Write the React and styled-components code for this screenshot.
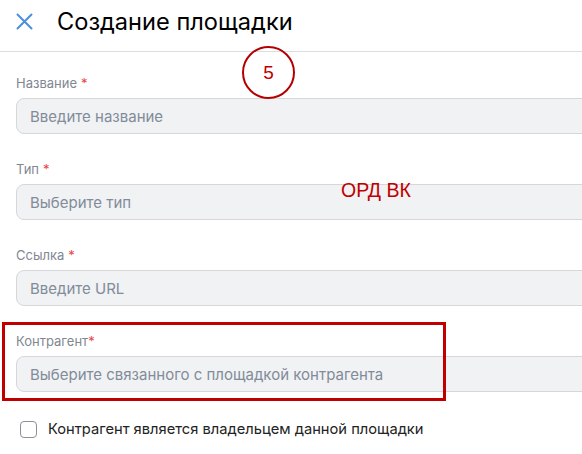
import React from "react";
import styled, { createGlobalStyle } from "styled-components";

const Global = createGlobalStyle`
  html, body { margin: 0; padding: 0; background: #fff; }
  body { font-family: Inter, "Noto Sans", sans-serif; overflow: hidden; }
  * { box-sizing: border-box; }
`;

const Page = styled.div`
  position: relative;
  width: 582px;
  height: 454px;
  overflow: hidden;
  background: #fff;
`;

const Header = styled.div`
  display: flex;
  align-items: center;
  gap: 23px;
  height: 52px;
  padding: 0 0 8px 15px;
  border-bottom: 1px solid #dcdde0;
`;

const CloseBtn = styled.button`
  display: flex;
  align-items: center;
  justify-content: center;
  width: 19px;
  height: 19px;
  padding: 0;
  border: none;
  background: none;
`;

const Title = styled.h1`
  margin: 0;
  font-size: 23.6px;
  font-weight: 400;
  color: #000;
`;

const Form = styled.div`
  display: flex;
  flex-direction: column;
  gap: 28px;
  padding: 24px 0 0 16px;
`;

const Field = styled.div`
  display: flex;
  flex-direction: column;
  gap: 8px;
`;

const Label = styled.label`
  font-size: 13px;
  line-height: 14px;
  color: #7f8792;
`;

const Star = styled.span`
  color: #e64646;
  margin-left: ${(p) => (p.$tight ? "0" : "4px")};
`;

const Input = styled.div`
  width: 600px;
  height: 36px;
  display: flex;
  align-items: center;
  padding-left: 13px;
  border: 1px solid #d5d7db;
  border-radius: 8px;
  background: #f1f2f4;
  font-size: 15px;
  color: #818c99;
`;

const CheckRow = styled.label`
  display: flex;
  align-items: center;
  gap: 11px;
  padding-left: 4px;
  font-size: 14.7px;
  color: #222;
`;

const Box = styled.span`
  width: 17px;
  height: 17px;
  border: 1.5px solid #8a9099;
  border-radius: 4px;
  background: #fff;
`;

const Circle = styled.div`
  position: absolute;
  left: 242px;
  top: 46px;
  width: 53px;
  height: 53px;
  border: 2.5px solid #b40000;
  border-radius: 50%;
  display: flex;
  align-items: center;
  justify-content: center;
  font-family: Arial, "Liberation Sans", sans-serif;
  font-size: 19px;
  color: #c00000;
`;

const Note = styled.div`
  position: absolute;
  left: 341px;
  top: 179px;
  font-family: Arial, "Liberation Sans", sans-serif;
  font-size: 19.5px;
  color: #c00000;
`;

const Frame = styled.div`
  position: absolute;
  left: 2px;
  top: 322px;
  width: 444px;
  height: 79px;
  border: 3px solid #c00000;
`;

const fields = [
  { label: "Название", ph: "Введите название" },
  { label: "Тип", ph: "Выберите тип" },
  { label: "Ссылка", ph: "Введите URL" },
  { label: "Контрагент", ph: "Выберите связанного с площадкой контрагента", tight: true },
];

export default function App() {
  return (
    <Page>
      <Global />
      <Header>
        <CloseBtn aria-label="close">
          <svg width="17" height="17" viewBox="0 0 17 17">
            <path d="M1.5 1.5 L15.5 15.5 M15.5 1.5 L1.5 15.5" stroke="#4a8fe0" strokeWidth="2" strokeLinecap="round" />
          </svg>
        </CloseBtn>
        <Title>Создание площадки</Title>
      </Header>
      <Form>
        {fields.map((f) => (
          <Field key={f.label}>
            <Label>
              {f.label}
              <Star $tight={f.tight}>*</Star>
            </Label>
            <Input>{f.ph}</Input>
          </Field>
        ))}
        <CheckRow>
          <Box />
          Контрагент является владельцем данной площадки
        </CheckRow>
      </Form>
      <Circle>5</Circle>
      <Note>ОРД ВК</Note>
      <Frame />
    </Page>
  );
}
